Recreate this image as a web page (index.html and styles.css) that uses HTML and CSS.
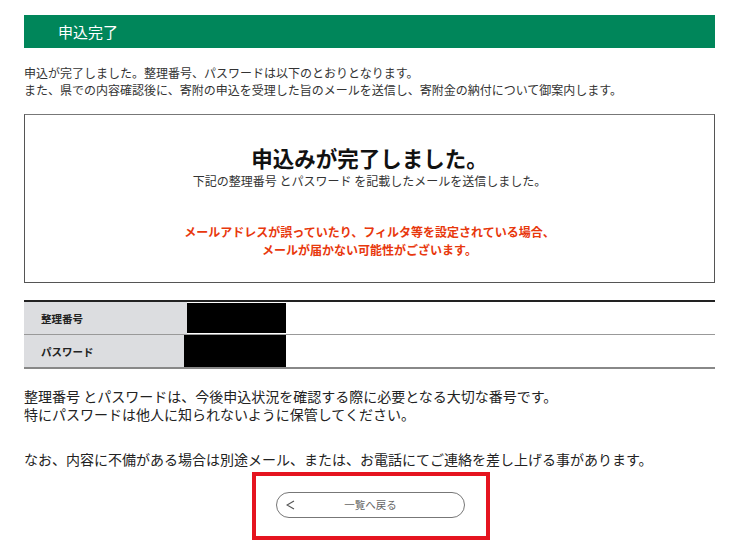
FILE: index.html
```html
<!DOCTYPE html>
<html lang="ja">
<head>
    <meta charset="UTF-8">
    <meta name="viewport" content="width=device-width, initial-scale=1.0">
    <title>申込完了</title>
    <link rel="stylesheet" href="styles.css">
</head>
<body>
    <div class="page">
        <h1 class="page-title">申込完了</h1>

        <p class="intro">
            申込が完了しました。整理番号、パスワードは以下のとおりとなります。<br>
            また、県での内容確認後に、寄附の申込を受理した旨のメールを送信し、寄附金の納付について御案内します。
        </p>

        <div class="done-box">
            <h2>申込みが完了しました。</h2>
            <p class="done-sub">下記の整理番号 とパスワード を記載したメールを送信しました。</p>
            <p class="done-warn">メールアドレスが誤っていたり、フィルタ等を設定されている場合、<br>メールが届かない可能性がございます。</p>
        </div>

        <table class="info-table">
            <tr>
                <th>整理番号</th>
                <td><span class="masked masked-1"></span></td>
            </tr>
            <tr>
                <th>パスワード</th>
                <td><span class="masked masked-2"></span></td>
            </tr>
        </table>

        <p class="note">整理番号 とパスワードは、今後申込状況を確認する際に必要となる大切な番号です。<br>特にパスワードは他人に知られないように保管してください。</p>
        <p class="note note-last">なお、内容に不備がある場合は別途メール、または、お電話にてご連絡を差し上げる事があります。</p>

        <div class="back-area">
            <a href="javascript:void(0)" class="btn-back">
                <svg class="arrow" width="9" height="10" viewBox="0 0 9 10"><polyline points="8,1 1,5 8,9" fill="none" stroke="#555" stroke-width="1.2"/></svg>
                一覧へ戻る
            </a>
        </div>
    </div>
</body>
</html>
```

FILE: styles.css
```css
body { margin: 0; padding: 0; background-color: #fff; color: #333; font-family: "Noto Sans CJK JP", "Noto Sans", sans-serif; }
.page { width: 691px; margin: 0 0 0 24px; padding-top: 15px; }

.page-title { margin: 0; height: 33px; line-height: 33px; padding-left: 34px; background-color: #00865a; color: #fff; font-size: 15px; font-weight: normal; }

.intro { margin: 16px 0 0; font-size: 12px; line-height: 17px; color: #333; }

/* 完了メッセージ */
.done-box {
    margin-top: 16px;
    border: 1px solid #555;
    border-top-color: #777;
    padding: 28px 10px 23px;
    text-align: center;
}
.done-box h2 { margin: 0; font-size: 21.5px; line-height: 29px; font-weight: bold; color: #111; }
.done-sub { margin: 0; font-size: 12px; line-height: 17px; color: #333; }
.done-warn { margin: 34px 0 0; font-size: 12px; line-height: 18px; font-weight: bold; color: #e8380d; }

/* 整理番号・パスワード */
.info-table { width: 100%; margin-top: 17px; border-collapse: collapse; border-top: 2px solid #222; border-bottom: 2px solid #888; }
.info-table th { width: 146px; padding: 0 0 0 17px; height: 32px; background-color: #dcdde0; text-align: left; font-size: 10.5px; font-weight: bold; color: #222; }
.info-table tr + tr th, .info-table tr + tr td { border-top: 1px solid #999; }
.info-table td { padding: 0; height: 32px; vertical-align: top; }
.masked { display: block; background-color: #000; }
.masked-1 { width: 99px; height: 30px; margin-top: 1px; }
.masked-2 { width: 102px; height: 32px; margin-left: -3px; }

.note { margin: 18px 0 0; font-size: 14px; line-height: 18px; color: #222; }
.note-last { margin-top: 27px; }

/* 戻るボタン */
.back-area { width: 230px; margin: 4px auto 0; padding: 16px 0 18px; border: 4px solid #e5141f; text-align: center; position: relative; left: 1px; }
.btn-back {
    display: block;
    position: relative;
    width: 187px;
    height: 24px;
    line-height: 24px;
    margin: 0 auto;
    border: 1px solid #777;
    border-radius: 13px;
    color: #666;
    font-size: 10.5px;
    text-decoration: none;
}
.btn-back .arrow { position: absolute; left: 9px; top: 7px; }
```
